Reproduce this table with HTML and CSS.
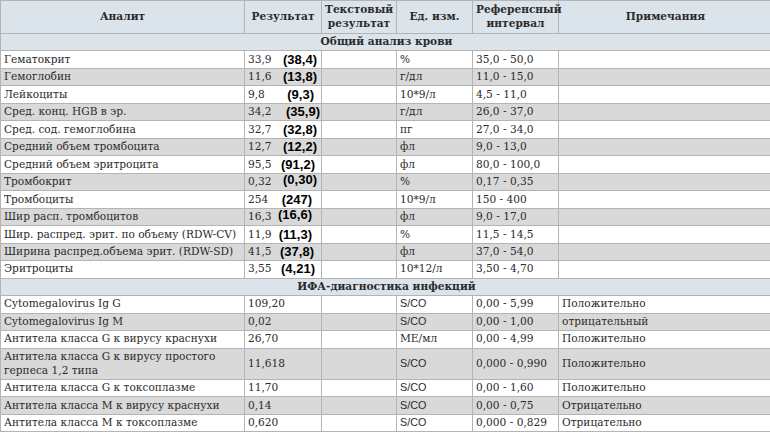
FILE: index.html
```
<!DOCTYPE html>
<html lang="ru">
<head>
<meta charset="utf-8">
<title>Результаты анализов</title>
<link rel="stylesheet" href="styles.css">
</head>
<body>
<table class="results">
  <colgroup>
    <col class="c-name"><col class="c-res"><col class="c-txt"><col class="c-unit"><col class="c-ref"><col class="c-note">
  </colgroup>
  <thead>
    <tr>
      <th>Аналит</th>
      <th>Результат</th>
      <th>Текстовый<br>результат</th>
      <th>Ед. изм.</th>
      <th>Референсный<br>интервал</th>
      <th>Примечания</th>
    </tr>
  </thead>
  <tbody>
    <tr class="section"><td colspan="6">Общий анализ крови</td></tr>
    <tr><td>Гематокрит</td><td><div class="res"><span>33,9</span><b>(38,4)</b></div></td><td></td><td>%</td><td>35,0 - 50,0</td><td></td></tr>
    <tr class="alt"><td>Гемоглобин</td><td><div class="res"><span>11,6</span><b>(13,8)</b></div></td><td></td><td>г/дл</td><td>11,0 - 15,0</td><td></td></tr>
    <tr><td>Лейкоциты</td><td><div class="res"><span>9,8</span><b class="in4">(9,3)</b></div></td><td></td><td>10*9/л</td><td>4,5 - 11,0</td><td></td></tr>
    <tr class="alt"><td>Сред. конц. HGB в эр.</td><td><div class="res"><span>34,2</span><b class="out">(35,9)</b></div></td><td></td><td>г/дл</td><td>26,0 - 37,0</td><td></td></tr>
    <tr><td>Сред. сод. гемоглобина</td><td><div class="res"><span>32,7</span><b>(32,8)</b></div></td><td></td><td>пг</td><td>27,0 - 34,0</td><td></td></tr>
    <tr class="alt"><td>Средний объем тромбоцита</td><td><div class="res"><span>12,7</span><b>(12,2)</b></div></td><td></td><td>фл</td><td>9,0 - 13,0</td><td></td></tr>
    <tr><td>Средний объем эритроцита</td><td><div class="res"><span>95,5</span><b class="in2">(91,2)</b></div></td><td></td><td>фл</td><td>80,0 - 100,0</td><td></td></tr>
    <tr class="alt"><td>Тромбокрит</td><td><div class="res"><span>0,32</span><b class="up">(0,30)</b></div></td><td></td><td>%</td><td>0,17 - 0,35</td><td></td></tr>
    <tr><td>Тромбоциты</td><td><div class="res"><span>254</span><b class="in5">(247)</b></div></td><td></td><td>10*9/л</td><td>150 - 400</td><td></td></tr>
    <tr class="alt"><td>Шир расп. тромбоцитов</td><td><div class="res"><span>16,3</span><b class="in5 up">(16,6)</b></div></td><td></td><td>фл</td><td>9,0 - 17,0</td><td></td></tr>
    <tr><td>Шир. распред. эрит. по объему (RDW-CV)</td><td><div class="res"><span>11,9</span><b class="in5">(11,3)</b></div></td><td></td><td>%</td><td>11,5 - 14,5</td><td></td></tr>
    <tr class="alt"><td>Ширина распред.объема эрит. (RDW-SD)</td><td><div class="res"><span>41,5</span><b class="in4">(37,8)</b></div></td><td></td><td>фл</td><td>37,0 - 54,0</td><td></td></tr>
    <tr><td>Эритроциты</td><td><div class="res"><span>3,55</span><b class="in2">(4,21)</b></div></td><td></td><td>10*12/л</td><td>3,50 - 4,70</td><td></td></tr>
    <tr class="section"><td colspan="6">ИФА-диагностика инфекций</td></tr>
    <tr><td>Cytomegalovirus Ig G</td><td>109,20</td><td></td><td class="sans">S/CO</td><td>0,00 - 5,99</td><td>Положительно</td></tr>
    <tr class="alt"><td>Cytomegalovirus Ig M</td><td>0,02</td><td></td><td class="sans">S/CO</td><td>0,00 - 1,00</td><td>отрицательный</td></tr>
    <tr><td>Антитела класса G к вирусу краснухи</td><td>26,70</td><td></td><td>МЕ/мл</td><td>0,00 - 4,99</td><td>Положительно</td></tr>
    <tr class="alt"><td>Антитела класса G к вирусу простого<br>герпеса 1,2 типа</td><td>11,618</td><td></td><td class="sans">S/CO</td><td>0,000 - 0,990</td><td>Положительно</td></tr>
    <tr><td>Антитела класса G к токсоплазме</td><td>11,70</td><td></td><td class="sans">S/CO</td><td>0,00 - 1,60</td><td>Положительно</td></tr>
    <tr class="alt"><td>Антитела класса M к вирусу краснухи</td><td>0,14</td><td></td><td class="sans">S/CO</td><td>0,00 - 0,75</td><td>Отрицательно</td></tr>
    <tr><td>Антитела класса M к токсоплазме</td><td>0,620</td><td></td><td class="sans">S/CO</td><td>0,000 - 0,829</td><td>Отрицательно</td></tr>
  </tbody>
</table>
</body>
</html>
```
FILE: styles.css
```
html, body {
  margin: 0;
  padding: 0;
  overflow: hidden;
  background: #ffffff;
}

.results {
  border-collapse: collapse;
  table-layout: fixed;
  width: 772px;
  font-family: "DejaVu Serif", serif;
  font-size: 10.6px;
  color: #2b2b2b;
}

.c-name { width: 244px; }
.c-res { width: 77px; }
.c-txt { width: 75px; }
.c-unit { width: 76px; }
.c-ref { width: 86px; }
.c-note { width: 214px; }

.results th,
.results td {
  border: 1px solid #b4b4b4;
  padding: 1.4px 3px;
  line-height: 13.7px;
  text-align: left;
  vertical-align: middle;
  white-space: nowrap;
}

.results th {
  background: #dce4eb;
  font-weight: bold;
  text-align: center;
  line-height: 13.6px;
  padding: 2.3px 3px;
}

.results tr.section td {
  background: #dce4eb;
  font-weight: bold;
  text-align: center;
}

.results tr.alt td {
  background: #d9d9d9;
}

.results td.sans {
  font-family: "Liberation Sans", Arial, sans-serif;
  font-size: 10.8px;
}

.res {
  display: flex;
  align-items: center;
  justify-content: space-between;
  height: 13.7px;
}

.res b {
  font-family: "Liberation Sans", Arial, sans-serif;
  font-size: 13px;
  font-weight: bold;
  color: #000;
  line-height: 13.7px;
  margin-right: 1px;
}

.res b.out { margin-right: -2px; }
.res b.in2 { margin-right: 3px; }
.res b.in4 { margin-right: 4px; }
.res b.in5 { margin-right: 6px; }
.res b.up { position: relative; top: -2px; }
```
